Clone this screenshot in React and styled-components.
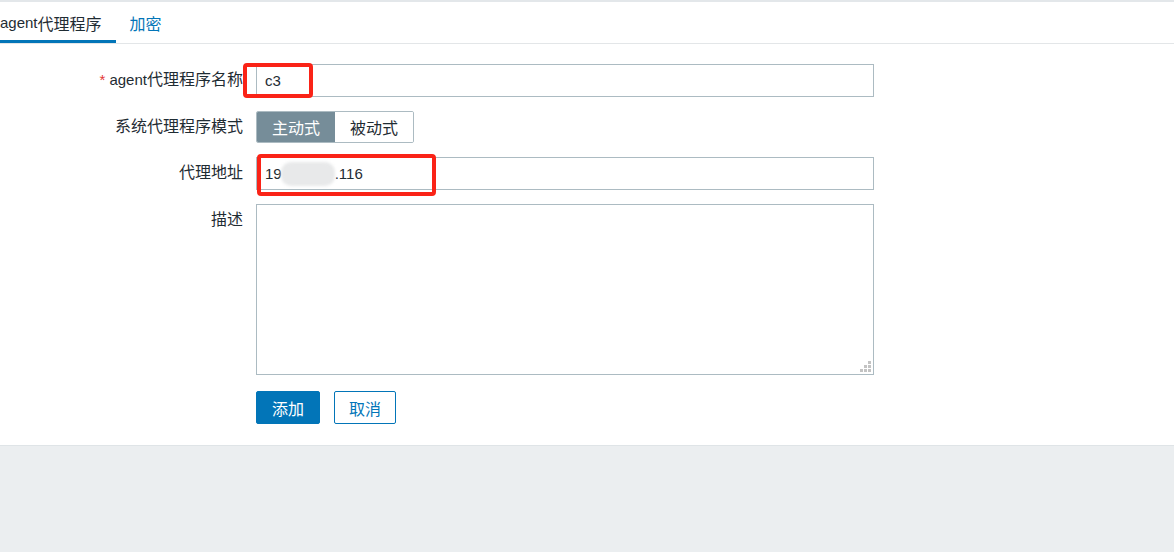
import React from "react";
import styled, { createGlobalStyle } from "styled-components";

const GlobalStyle = createGlobalStyle`
  html, body { margin: 0; padding: 0; }
  body {
    background: #ebeef0;
    font-family: "Liberation Sans", Arial, "Noto Sans CJK SC", sans-serif;
    font-size: 16px;
    color: #1f2c33;
  }
  * { box-sizing: border-box; }
`;

const Latin = styled.span`
  font-size: 15px;
`;

const Panel = styled.div`
  background: #fff;
  border-top: 2px solid #e3e7ea;
  border-bottom: 1px solid #dfe4e7;
  overflow: hidden;
`;

const TabBar = styled.div`
  display: flex;
  height: 42px;
  border-bottom: 1px solid #e3e6e8;
  margin-left: -14px;
`;

const Tab = styled.div`
  display: flex;
  align-items: center;
  padding: 3px 14px 0;
  font-size: 16px;
  color: ${(p) => (p.$active ? "#1f2c33" : "#0275b8")};
  border-bottom: 3px solid ${(p) => (p.$active ? "#0275b8" : "transparent")};
  cursor: pointer;
`;

const Form = styled.div`
  display: grid;
  grid-template-columns: 243px 618px;
  column-gap: 13px;
  row-gap: 14px;
  padding: 20px 0 21px;
`;

const Label = styled.div`
  text-align: right;
  font-size: 16px;
  line-height: 32px;
  white-space: nowrap;
  color: #1f2c33;
`;

const Star = styled.span`
  color: #e33734;
  font-size: 15px;
  margin-right: 4px;
`;

const Field = styled.div`
  position: relative;
  display: flex;
  align-items: flex-start;
`;

const TextBox = styled.div`
  width: 100%;
  height: 33px;
  border: 1px solid #acbbc2;
  background: #fff;
  padding: 0 8px;
  display: flex;
  align-items: center;
  font-size: 15px;
  color: #1f2c33;
`;

const Blurred = styled.span`
  display: inline-block;
  width: 54px;
  height: 24px;
  margin: 0 0 0 -1px;
  border-radius: 10px;
  background: #e8e9ea;
  filter: blur(1.5px);
`;

const TextArea = styled.div`
  position: relative;
  width: 100%;
  height: 171px;
  border: 1px solid #acbbc2;
  background: #fff;
`;

const Grip = styled.svg`
  position: absolute;
  right: 2px;
  bottom: 2px;
`;

const Segmented = styled.div`
  display: flex;
  height: 32px;
  border: 1px solid #acbbc2;
  border-radius: 2px;
  overflow: hidden;
`;

const Segment = styled.div`
  display: flex;
  align-items: center;
  padding: 0 ${(p) => (p.$active ? "15px" : "15px")};
  font-size: 16px;
  background: ${(p) => (p.$active ? "#768d99" : "#fff")};
  color: ${(p) => (p.$active ? "#fff" : "#1f2c33")};
`;

const Buttons = styled.div`
  display: flex;
  gap: 14px;
  padding-top: 2px;
`;

const Button = styled.button`
  height: 33px;
  padding: 0 ${(p) => (p.$primary ? "15px" : "14px")};
  font-family: inherit;
  font-size: 16px;
  border-radius: 2px;
  border: 1px solid #0275b8;
  background: ${(p) => (p.$primary ? "#0275b8" : "#fff")};
  color: ${(p) => (p.$primary ? "#fff" : "#0275b8")};
  cursor: pointer;
`;

const Annotation = styled.div`
  position: absolute;
  border: 4px solid #fa2317;
  border-radius: 4px;
  left: ${(p) => p.$left}px;
  top: ${(p) => p.$top}px;
  width: ${(p) => p.$w}px;
  height: ${(p) => p.$h}px;
  pointer-events: none;
`;

export default function App() {
  return (
    <>
      <GlobalStyle />
      <Panel>
        <TabBar>
          <Tab $active>
            <Latin>agent</Latin>代理程序
          </Tab>
          <Tab>加密</Tab>
        </TabBar>
        <Form>
          <Label>
            <Star>*</Star>
            <Latin>agent</Latin>代理程序名称
          </Label>
          <Field>
            <TextBox>c3</TextBox>
            <Annotation $left={-13} $top={-1} $w={70} $h={35} />
          </Field>

          <Label>系统代理程序模式</Label>
          <Field>
            <Segmented>
              <Segment $active>主动式</Segment>
              <Segment>被动式</Segment>
            </Segmented>
          </Field>

          <Label>代理地址</Label>
          <Field>
            <TextBox>
              19<Blurred />.116
            </TextBox>
            <Annotation $left={1} $top={-3} $w={179} $h={42} />
          </Field>

          <Label>描述</Label>
          <Field>
            <TextArea>
              <Grip width="11" height="11" viewBox="0 0 11 11">
                <rect x="8" y="0" width="3" height="3" fill="#c3c3c3" />
                <rect x="4" y="4" width="3" height="3" fill="#c3c3c3" />
                <rect x="8" y="4" width="3" height="3" fill="#c3c3c3" />
                <rect x="0" y="8" width="3" height="3" fill="#c3c3c3" />
                <rect x="4" y="8" width="3" height="3" fill="#c3c3c3" />
                <rect x="8" y="8" width="3" height="3" fill="#c3c3c3" />
              </Grip>
            </TextArea>
          </Field>

          <div />
          <Buttons>
            <Button $primary>添加</Button>
            <Button>取消</Button>
          </Buttons>
        </Form>
      </Panel>
    </>
  );
}
